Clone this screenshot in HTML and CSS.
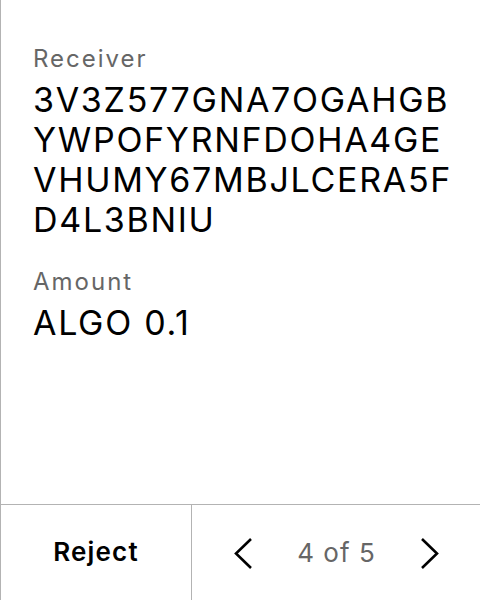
FILE: index.html
```html
<!DOCTYPE html>
<html>
<head>
<meta charset="utf-8">
<link rel="stylesheet" href="styles.css">
</head>
<body>
<div class="screen">
  <div class="content">
    <div class="field">
      <div class="label">Receiver</div>
      <div class="value">3V3Z577GNA7OGAHGB<br>YWPOFYRNFDOHA4GE<br>VHUMY67MBJLCERA5F<br>D4L3BNIU</div>
    </div>
    <div class="field">
      <div class="label">Amount</div>
      <div class="value">ALGO 0.1</div>
    </div>
  </div>
  <div class="bar">
    <div class="reject">Reject</div>
    <div class="pager">
      <svg class="chev" width="20" height="32" viewBox="0 0 20 32"><path d="M18 2 L3 16.5 L18 31" fill="none" stroke="#000" stroke-width="2.6"/></svg>
      <span class="count">4 of 5</span>
      <svg class="chev" width="20" height="32" viewBox="0 0 20 32"><path d="M2 2 L17 16.5 L2 31" fill="none" stroke="#000" stroke-width="2.6"/></svg>
    </div>
  </div>
</div>
</body>
</html>
```
FILE: styles.css
```css
html, body {
  margin: 0;
  padding: 0;
  background: #fff;
}
body {
  font-family: Inter, "Noto Sans", sans-serif;
  color: #000;
}
.screen {
  width: 480px;
  height: 600px;
  box-sizing: border-box;
  border-left: 1px solid #b3b3b3;
  display: flex;
  flex-direction: column;
}
.content {
  flex: 1;
  padding: 44px 0 0 32px;
}
.field {
  margin-bottom: 27px;
}
.label {
  font-size: 24px;
  line-height: 29px;
  color: #666;
  letter-spacing: 2px;
  margin-bottom: 7px;
}
.value {
  font-size: 34px;
  line-height: 40px;
  letter-spacing: 1.7px;
}
.bar {
  height: 96px;
  box-sizing: border-box;
  border-top: 1px solid #b3b3b3;
  display: flex;
}
.reject {
  width: 191px;
  border-right: 1px solid #b3b3b3;
  display: flex;
  align-items: center;
  justify-content: center;
  font-size: 26px;
  font-weight: 600;
  letter-spacing: 1.2px;
  padding-bottom: 3px;
  box-sizing: border-box;
}
.pager {
  flex: 1;
  display: flex;
  align-items: center;
  justify-content: space-between;
  padding: 0 40px 0 41px;
}
.count {
  font-size: 26px;
  color: #666;
  letter-spacing: 1px;
}
.chev {
  display: block;
}
```
